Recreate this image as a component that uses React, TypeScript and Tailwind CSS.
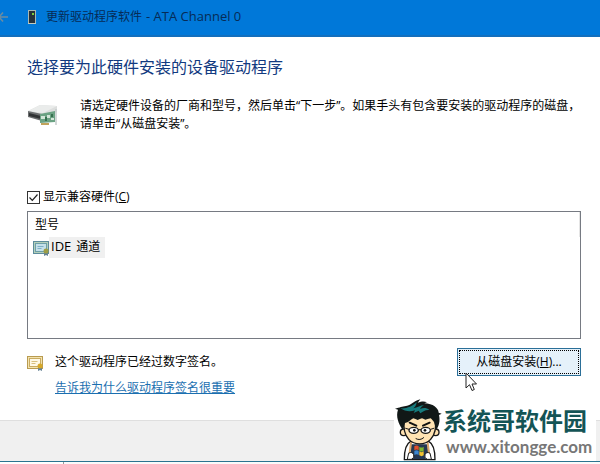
import React, { useState } from 'react';

const BackArrow: React.FC = () => (
  <svg className="h-3 w-2 shrink-0" viewBox="4 0 8 12" fill="none" stroke="#6c8ca0" strokeWidth="1.6">
    <path d="M3 6h9M3 6l4-4.5M3 6l4 4.5" />
  </svg>
);

const DeviceIcon: React.FC = () => (
  <svg className="h-4 w-2 shrink-0" viewBox="0 0 8 16">
    <rect x="0.5" y="1.5" width="7" height="13" fill="#26313a" stroke="#a9b8b4" />
    <rect x="4" y="4" width="2" height="2" fill="#7ccf3a" />
    <path d="M0 14.5h8" stroke="#c3c9bd" />
  </svg>
);

const ControllerIcon: React.FC = () => (
  <svg className="h-6 w-8 shrink-0" viewBox="0 0 32 24">
    <path d="M1 8 13 2l17 1v6l-14 5z" fill="#dcdedd" />
    <path d="M1 8 13 2l17 1-14 7z" fill="#eaeceb" />
    <path d="M1 8l14 3v7L1 14z" fill="#6b6e6f" />
    <path d="M2 10l12 3v3L2 13z" fill="#303334" />
    <path d="M13 11l15-3v11l-15 1z" fill="#6ba283" />
    <path d="M14 13h4v3h-4zM20 12h3v3h-3zM24 15h3v2h-3z" fill="#d3e5d8" />
    <path d="M18 14h2v4h-2zM24 11h2v3h-2z" fill="#37704f" />
    <path d="M14 20h8v2h-8z" fill="#c1a35b" />
    <path d="M29 6v16" stroke="#c5cbcb" strokeWidth="1.5" />
  </svg>
);

const CertIcon: React.FC<{ selected?: boolean }> = ({ selected }) => (
  <svg className="h-4 w-4 shrink-0" viewBox="0 0 16 16">
    <rect x="0.5" y="1.5" width="15" height="12" fill={selected ? '#b3cfb9' : '#f3e3ae'} stroke={selected ? '#5c8c9c' : '#b99b50'} />
    <rect x="2.5" y="3.5" width="11" height="8" fill={selected ? '#c5e0ea' : '#fff9e6'} stroke={selected ? '#6da0a8' : '#c9ab61'} />
    <path d="M4.5 6.5h6M4.5 8.5h4" stroke={selected ? '#7db1c8' : '#d8c080'} />
    <path d="M11 12v4l2-1 2 1v-4z" fill="#668294" />
    <circle cx="13" cy="11" r="2.5" fill={selected ? '#9d9d45' : '#d6a829'} />
  </svg>
);

const Mascot: React.FC = () => (
  <svg className="h-16 w-12 shrink-0" viewBox="12 20 144 192" strokeLinecap="round" strokeLinejoin="round">
    {/* arms and body */}
    <path d="M58 154c-12 6-18 28-18 54h92c0-26-6-48-18-54z" fill="#fff" stroke="#181818" strokeWidth="4" />
    <path d="M60 162h50l2 44H58z" fill="#253752" />
    <path d="M60 158l-4 30M110 158l4 30" stroke="#d9a56b" strokeWidth="6" />
    <path d="M70 168q7-5 13 0v12q-6-5-13 0z" fill="#e0502a" />
    <path d="M85 169q7 5 13 0v12q-6 5-13 0z" fill="#81b62f" />
    <path d="M70 182q7-5 13 0v12q-6-5-13 0z" fill="#3b86d0" />
    <path d="M85 183q7 5 13 0v12q-6 5-13 0z" fill="#f2c230" />
    <path d="M54 188q10-5 14 5t-7 14H50zM116 188q-10-5-14 5t7 14h11z" fill="#fff" stroke="#181818" strokeWidth="3" />
    {/* ears and face */}
    <circle cx="38" cy="126" r="10" fill="#ffe1b0" stroke="#181818" strokeWidth="4" />
    <circle cx="134" cy="126" r="10" fill="#ffe1b0" stroke="#181818" strokeWidth="4" />
    <path d="M40 82h92c5 30 0 52-14 66-16 17-48 17-64 0-14-14-18-36-14-66z" fill="#ffe3b3" stroke="#181818" strokeWidth="4" />
    {/* hair */}
    <path d="M36 119C22 100 14 78 21 58l-9-3c15-3 21-7 33-8 18-3 23-15 43-20l-8 10c12-4 19-5 28-1l-8 3c26 1 42 14 43 28l9 3-8 4c4 18 0 34-9 45l-6-24-10-12-16 5-10-5-13 6-13-6-16 12-9 3z" fill="#111817" />
    <path d="M29 54c17 2 35-6 48-18-1 9-5 14-10 18 12-2 22-9 32-9-6 3-9 6-12 11 10-4 20-4 28 3-14-1-20 6-27 10l-5-8-15 7 4-8c-15 5-31 3-43-6z" fill="#167a7c" />
    {/* brows, glasses, mouth */}
    <path d="M56 97l20 9M116 97l-20 9" stroke="#111" strokeWidth="6" />
    <g fill="#fff" stroke="#181818" strokeWidth="4">
      <ellipse cx="68" cy="120" rx="14" ry="9" />
      <ellipse cx="104" cy="120" rx="14" ry="9" />
    </g>
    <path d="M83 118h6M54 117l-10-3M119 117l9-3" stroke="#181818" strokeWidth="3" />
    <circle cx="70" cy="120" r="4" fill="#111" />
    <circle cx="102" cy="120" r="4" fill="#111" />
    <path d="M75 145q12 7 23-3" fill="none" stroke="#181818" strokeWidth="3" />
  </svg>
);

const Cursor: React.FC = () => (
  <svg className="absolute top-6 left-2 h-5 w-3" viewBox="0 0 12 20">
    <path d="M1 1v15l3.5-3.3L7 18.5l2.3-1L7 12h4.5z" fill="#fff" stroke="#222" />
  </svg>
);

export default function App() {
  const [showCompatible, setShowCompatible] = useState(true);

  return (
    <div className="bg-white font-['Open_Sans','Noto_Sans_CJK_SC',sans-serif] text-[12px] leading-[18px] text-black">
      {/* Title bar */}
      <header className="flex h-[37px] items-center border-b-2 border-[#136fbd] bg-[#0078d9] pb-[2px]">
        <button type="button" aria-label="Back" className="mr-5">
          <BackArrow />
        </button>
        <DeviceIcon />
        <span className="ml-[10px] flex items-baseline gap-1 whitespace-nowrap text-[#062b56]">
          <span>更新驱动程序软件</span>
          <span className="text-[13px]">- ATA Channel 0</span>
        </span>
      </header>

      <main className="pr-[19px] pl-[27px] pt-[18px]">
        <h1 className="text-[16px] leading-6 text-[#123a80]">选择要为此硬件安装的设备驱动程序</h1>

        <div className="mt-[18px] flex h-[91px] items-start">
          <div className="pt-[6px]">
            <ControllerIcon />
          </div>
          <p className="ml-[21px] whitespace-nowrap">
            请选定硬件设备的厂商和型号，然后单击“下一步”。如果手头有包含要安装的驱动程序的磁盘，
            <br />
            请单击“从磁盘安装”。
          </p>
        </div>

        <label className="flex items-center gap-[3px]">
          <span className="relative flex h-[13px] w-[13px]">
            <input
              type="checkbox"
              checked={showCompatible}
              onChange={(e) => setShowCompatible(e.target.checked)}
              className="h-[13px] w-[13px] appearance-none border border-[#333] bg-white"
            />
            {showCompatible && (
              <svg className="pointer-events-none absolute inset-0" viewBox="0 0 13 13" fill="none" stroke="#222" strokeWidth="1.2">
                <path d="M2.5 6.5 5.3 9.3 10.5 3.5" />
              </svg>
            )}
          </span>
          <span>
            显示兼容硬件(<u>C</u>)
          </span>
        </label>

        {/* Model list */}
        <div className="mt-[5px] h-[128px] border border-[#767a82]">
          <table className="w-full border-collapse text-left">
            <thead>
              <tr>
                <th className="h-[25px] border-r border-[#e5e5e5] pl-[7px] font-normal">型号</th>
              </tr>
            </thead>
            <tbody>
              <tr>
                <td className="pl-[5px]">
                  <button type="button" className="flex items-center">
                    <CertIcon selected />
                    <span className="flex h-[21px] items-baseline gap-[5px] bg-[#f0f0f0] pr-[5px] pl-[2px]">
                      <span className="text-[13px]">IDE</span>
                      <span>通道</span>
                    </span>
                  </button>
                </td>
              </tr>
            </tbody>
          </table>
        </div>

        <div className="mt-[9px] flex h-[72px] items-start justify-between">
          <div className="flex">
            <div className="pt-[7px]">
              <CertIcon />
            </div>
            <div className="ml-3 pt-[5px]">
              <p>这个驱动程序已经过数字签名。</p>
              <a href="#signing" className="mt-2 block text-[#1b6fb0] underline">
                告诉我为什么驱动程序签名很重要
              </a>
            </div>
          </div>
          <div className="relative">
            <button type="button" className="h-7 w-[124px] border border-[#2b6f98] bg-[#e5f1fa] p-px">
              <span className="flex h-full items-center justify-center border border-dotted border-black">
                从磁盘安装(<u>H</u>)...
              </span>
            </button>
            <Cursor />
          </div>
        </div>
      </main>

      {/* Command bar */}
      <footer className="relative h-[42px] border-t border-b border-t-[#dfdfdf] border-b-[#2b7390] bg-[#f0f0f0]">
        <div className="absolute right-1 bottom-0 flex h-[66px] items-end bg-white pl-px">
          <Mascot />
          <div className="w-[153px] pb-1 whitespace-nowrap">
            <div className="font-['Noto_Sans_CJK_SC',sans-serif] text-[24px] leading-[34px] font-bold text-[#145456]">系统哥软件园</div>
            <div className="pl-[3px] font-[Lato,sans-serif] text-[17px] leading-[20px] font-bold text-[#777]">www.xitongge.com</div>
          </div>
        </div>
      </footer>
      <div className="flex h-[2px]">
        <div className="w-16 border-r border-[#999]" />
        <div className="flex-1 bg-[#fafafa]" />
      </div>
    </div>
  );
}
